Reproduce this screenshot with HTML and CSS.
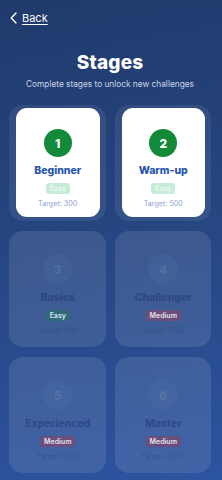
FILE: index.html
```html
<!DOCTYPE html>
<html>
<head>
<meta charset="utf-8">
<title>Stages</title>
<link rel="stylesheet" href="styles.css">
</head>
<body>
<div class="page">
	<a class="back" href="#">
		<svg width="7" height="12" viewBox="0 0 7 12"><path d="M6 1 L1.2 6 L6 11" fill="none" stroke="#fff" stroke-width="1.4" stroke-linecap="round" stroke-linejoin="round"/></svg>
		<span>Back</span>
	</a>

	<div class="head">
		<h1>Stages</h1>
		<p>Complete stages to unlock new challenges</p>
	</div>

	<ul class="stages">
		<li class="stage open">
			<div class="card">
				<div class="num">1</div>
				<div class="name">Beginner</div>
				<span class="tag easy">Easy</span>
				<div class="target">Target: 300</div>
			</div>
		</li>
		<li class="stage open">
			<div class="card">
				<div class="num">2</div>
				<div class="name">Warm-up</div>
				<span class="tag easy">Easy</span>
				<div class="target">Target: 500</div>
			</div>
		</li>
		<li class="stage locked">
			<div class="card">
				<div class="num">3</div>
				<div class="name">Basics</div>
				<span class="tag easy">Easy</span>
				<div class="target">Target: 800</div>
			</div>
		</li>
		<li class="stage locked">
			<div class="card">
				<div class="num">4</div>
				<div class="name">Challenger</div>
				<span class="tag medium">Medium</span>
				<div class="target">Target: 1000</div>
			</div>
		</li>
		<li class="stage locked">
			<div class="card">
				<div class="num">5</div>
				<div class="name">Experienced</div>
				<span class="tag medium">Medium</span>
				<div class="target">Target: 1500</div>
			</div>
		</li>
		<li class="stage locked">
			<div class="card">
				<div class="num">6</div>
				<div class="name">Master</div>
				<span class="tag medium">Medium</span>
				<div class="target">Target: 2000</div>
			</div>
		</li>
	</ul>
</div>
</body>
</html>
```

FILE: styles.css
```css
*{ margin:0; padding:0; box-sizing:border-box;}
html,body{ height:100%;}
body{ font-family:Inter,"Noto Sans",sans-serif; color:#fff; background:linear-gradient(170deg,#203a6c 0%,#26457f 45%,#2d54a0 100%);}
li{ list-style:none;}
.page{ min-height:480px; padding:8px 11px 0 9px;}

.back{ display:inline-flex; align-items:center; gap:5px; margin-left:1px; color:#fff; font-size:11px; text-decoration:none;}
.back span{ text-decoration:underline; text-underline-offset:2px;}

.head{ text-align:center; margin-top:23px;}
.head h1{ font-size:19px; font-weight:800; line-height:24px; letter-spacing:0.2px;}
.head p{ font-size:8.3px; line-height:12px; margin-top:3px; color:#cdd5ea;}

.stages{ display:grid; grid-template-columns:1fr 1fr; column-gap:9px; row-gap:10px; margin-top:15px;}
.stage{ height:116px; border-radius:14px;}
.stage.open{ background:rgba(255,255,255,0.07); padding:3px 6px 4px 7px;}
.stage.locked{ background:rgba(255,255,255,0.1);}

.card{ height:100%; border-radius:11px; display:flex; flex-direction:column; align-items:center; padding-top:21px;}
.open .card{ background:#fff;}
.locked .card{ margin:3px 6px 4px 7px; height:auto; padding-top:20px;}

.num{ width:28px; height:28px; border-radius:50%; background:#138a3a; color:#fff; font-size:12px; font-weight:800; display:flex; align-items:center; justify-content:center;}
.name{ margin-top:7px; font-size:10.5px; line-height:14px; font-weight:800; color:#2a55ad;}
.tag{ margin-top:5px; height:11px; line-height:11px; padding:0 4px; border-radius:3px; font-size:7px; font-weight:600; color:#eef8f2;}
.tag.easy{ background:#c6ebd6;}
.target{ margin-top:5px; font-size:7.2px; line-height:10px; color:#8ea3d2;}

.locked .num{ width:30px; height:30px; background:rgba(80,120,170,0.22); color:rgba(255,255,255,0.1);}
.locked .name{ color:rgba(30,52,112,0.5);}
.locked .tag.easy{ background:#2f6b78; color:#d6e4ec;}
.locked .tag.medium{ background:#6a4f7c; color:#e6e0ea;}
.locked .target{ color:rgba(30,52,112,0.35);}
```
